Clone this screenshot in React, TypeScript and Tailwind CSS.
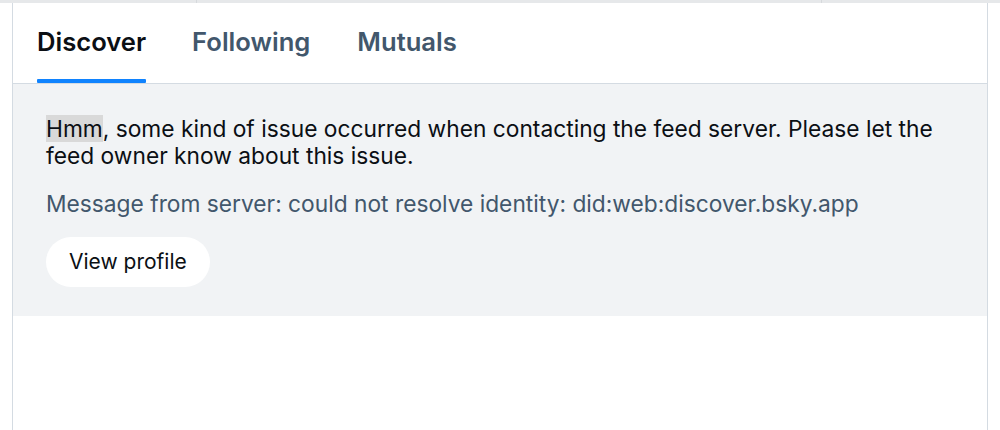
import React from "react";

export default function App() {
  return (
    <div className="w-[1000px] h-[430px] bg-white overflow-hidden" style={{ fontFamily: "Inter, 'Noto Sans', sans-serif" }}>
      <div className="flex h-[3px] bg-[#e6e8ea]">
        <div className="w-[197px] border-r border-[#d6d9dc]" />
        <div className="w-[625px] border-r border-[#d6d9dc]" />
        <div className="flex-1" />
      </div>
      <div className="ml-[12px] w-[976px] border-x border-[#d4dbe2] h-[427px] flex flex-col">
        <div className="flex h-[81px] border-b border-[#d4dbe2]">
          <div className="px-6 flex flex-col">
            <div className="flex-1 flex items-center pt-[3px] text-[25.6px] font-semibold text-[#0b0f14]">Discover</div>
            <div className="h-[4px] bg-[#1083fe] rounded-[1px]" />
          </div>
          <div className="pl-[22px] pr-6 flex flex-col">
            <div className="flex-1 flex items-center pt-[3px] text-[25.6px] font-semibold text-[#42576c]">Following</div>
            <div className="h-[4px]" />
          </div>
          <div className="pl-[23px] pr-6 flex flex-col">
            <div className="flex-1 flex items-center pt-[3px] text-[25.6px] font-semibold text-[#42576c]">Mutuals</div>
            <div className="h-[4px]" />
          </div>
        </div>
        <div className="bg-[#f1f3f5] px-[33px] pt-[31px] pb-[29px] flex flex-col gap-5">
          <p className="text-[22.75px] leading-[27px] text-[#0b0f14] mb-[1px]">
            <span className="bg-[#d9d9d9]">Hmm</span>, some kind of issue occurred when contacting the feed server. Please let the feed owner know about this issue.
          </p>
          <p className="text-[22.75px] leading-[27px] text-[#42576c]">
            Message from server: could not resolve identity: did:web:discover.bsky.app
          </p>
          <div>
            <button className="h-[50px] px-[23px] rounded-full bg-white text-[21px] text-[#0b0f14]">View profile</button>
          </div>
        </div>
      </div>
    </div>
  );
}
